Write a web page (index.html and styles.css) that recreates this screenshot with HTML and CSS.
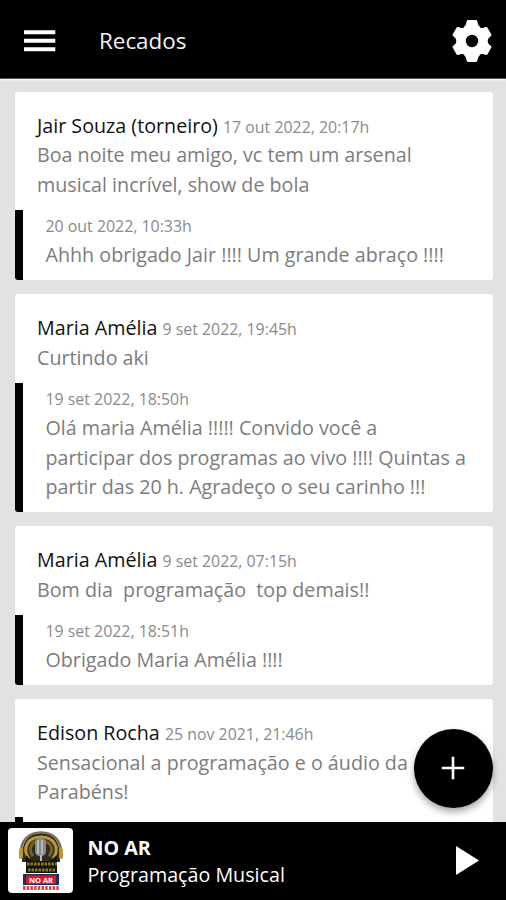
FILE: index.html
```html
<!DOCTYPE html>
<html lang="pt-BR">
<head>
<meta charset="utf-8">
<title>Recados</title>
<link rel="stylesheet" href="styles.css">
</head>
<body>
<div class="app">
  <header class="topbar">
    <svg class="menu-icon" viewBox="0 0 32 22" aria-hidden="true"><path d="M0 2.3h31.3M0 10.8h31.3M0 19.3h31.3"/></svg>
    <h1 class="title">Recados</h1>
    <svg class="gear-icon" viewBox="-21 -21 42 42" aria-hidden="true">
      <defs><path id="tooth" d="M-6.5-13.5-4.8-15.5-3.9-19.4H3.9L4.8-15.5 6.5-13.5z"/></defs>
      <g class="teeth">
        <use href="#tooth"/><use href="#tooth" transform="rotate(60) scale(.96)"/><use href="#tooth" transform="rotate(120) scale(.96)"/>
        <use href="#tooth" transform="rotate(180)"/><use href="#tooth" transform="rotate(240) scale(.96)"/><use href="#tooth" transform="rotate(300) scale(.96)"/>
      </g>
      <circle class="ring" r="10.8"/>
    </svg>
  </header>
  <main class="feed">
    <article class="card">
      <div class="message">
        <div class="meta"><span class="name">Jair Souza (torneiro)</span> <time>17 out 2022, 20:17h</time></div>
        <p>Boa noite meu amigo, vc tem um arsenal<br>musical incrível, show de bola</p>
      </div>
      <div class="reply">
        <div class="meta"><time>20 out 2022, 10:33h</time></div>
        <p>Ahhh obrigado Jair !!!! Um grande abraço !!!!</p>
      </div>
    </article>
    <article class="card">
      <div class="message">
        <div class="meta"><span class="name">Maria Amélia</span> <time>9 set 2022, 19:45h</time></div>
        <p>Curtindo aki</p>
      </div>
      <div class="reply">
        <div class="meta"><time>19 set 2022, 18:50h</time></div>
        <p>Olá maria Amélia !!!!! Convido você a<br>participar dos programas ao vivo !!!! Quintas a<br>partir das 20 h. Agradeço o seu carinho !!!</p>
      </div>
    </article>
    <article class="card">
      <div class="message">
        <div class="meta"><span class="name">Maria Amélia</span> <time>9 set 2022, 07:15h</time></div>
        <p>Bom dia&nbsp; programação&nbsp; top demais!!</p>
      </div>
      <div class="reply">
        <div class="meta"><time>19 set 2022, 18:51h</time></div>
        <p>Obrigado Maria Amélia !!!!</p>
      </div>
    </article>
    <article class="card">
      <div class="message">
        <div class="meta"><span class="name">Edison Rocha</span> <time>25 nov 2021, 21:46h</time></div>
        <p>Sensacional a programação e o áudio da<br>Parabéns!</p>
      </div>
      <div class="reply"></div>
    </article>
  </main>
  <button class="fab" aria-label="Adicionar"><svg viewBox="0 0 24 24"><path d="M12 .8v22.4M.8 12h22.4"/></svg></button>
  <footer class="player">
    <svg class="cover" viewBox="0 0 65 65" aria-hidden="true">
      <rect width="65" height="65" rx="4" fill="#fff"/>
      <path d="M14 28C14 12 22 5 33 5s19 7 19 23v6H14z" fill="#302b20"/>
      <path d="M13 27C12 12 21 4.5 33 4.5S54 12 53 27" fill="none" stroke="#77705c" stroke-width="2.5"/>
      <path d="M21 31C13 19 21 9 33 9s20 10 12 22" fill="none" stroke="#b89b38" stroke-width="3"/>
      <path d="M25 28c-6-8-1-15 8-15s14 7 8 15" fill="none" stroke="#75602a" stroke-width="3"/>
      <rect x="11" y="20" width="4" height="11" rx="2" fill="#b89a30"/>
      <rect x="51" y="20" width="4" height="11" rx="2" fill="#b89a30"/>
      <rect x="27" y="10" width="11" height="18" rx="4.5" fill="#888"/>
      <path d="M30 12v14M34 12v14" stroke="#c8c8c8" stroke-width="1.5"/>
      <path d="M33 27v6" stroke="#bbb" stroke-width="2"/>
      <path d="M18 27l6 6h18l7-6v18H18z" fill="#171308"/>
      <path d="M19 36h30M20 42h28" stroke="#8d7a22" stroke-width="3" stroke-dasharray="2.5 1"/>
      <rect x="15" y="46" width="36" height="11" fill="#143364"/>
      <rect x="18" y="47.5" width="30" height="8.5" fill="#df1825"/>
      <text x="33" y="54.5" class="cover-text">NO AR</text>
      <path d="M15 60h36" stroke="#d64850" stroke-width="4" stroke-dasharray="2.5 1.2"/>
    </svg>
    <div class="track"><strong>NO AR</strong><span>Programação Musical</span></div>
    <svg class="play" viewBox="0 0 23 29" aria-hidden="true"><path d="M0 0 23 14.5 0 29z"/></svg>
  </footer>
</div>
</body>
</html>
```

FILE: styles.css
```css
* { box-sizing: border-box; }
body { margin: 0; font-family: "Open Sans", "Noto Sans", sans-serif; }
.app {
  position: relative;
  display: flex;
  flex-direction: column;
  height: 900px;
  overflow: hidden;
  background: #e2e2e2;
}
.topbar {
  flex: none;
  display: flex;
  align-items: center;
  height: 79px;
  padding: 3px 13.5px 0 24px;
  background: #000;
  border-bottom: 1px solid #555;
  box-shadow: 0 1px 2px #fff;
}
.menu-icon { width: 32px; height: 22px; stroke: #fff; stroke-width: 4; }
.title { margin: 0 auto 0 43px; color: #f4f4f4; font-size: 22.4px; font-weight: 400; line-height: 30px; }
.gear-icon { width: 42px; height: 42px; }
.teeth { fill: #fff; stroke: #fff; stroke-width: 3; stroke-linejoin: round; }
.ring { fill: none; stroke: #fff; stroke-width: 9.2; }
.feed {
  flex: 1;
  min-height: 0;
  overflow: hidden;
  display: flex;
  flex-direction: column;
  gap: 14px;
  padding: 12.6px 13.5px 0 14.5px;
}
.card { flex: none; overflow: hidden; border-radius: 3px; background: #fff; }
.message { padding: 19px 0 10.8px 22.5px; }
.reply { min-height: 40px; padding: .8px 0 10.4px 23px; border-left: 8px solid #000; }
.meta, .card p { margin: 0; line-height: 29.5px; white-space: nowrap; }
.meta { height: 29.5px; font-size: 19.7px; }
.reply .meta { line-height: 28px; }
.name { color: #111; }
time { color: #8a8a8a; font-size: 15.9px; }
.card p { color: #7c7c7c; font-size: 19.7px; }
.fab {
  position: absolute;
  right: 13.5px;
  top: 728.5px;
  display: grid;
  place-items: center;
  width: 79px;
  height: 79px;
  padding: 0;
  border: 0;
  border-radius: 50%;
  background: #000;
  box-shadow: 0 4px 7px rgba(0, 0, 0, .35);
}
.fab svg { width: 24px; height: 24px; stroke: #fff; stroke-width: 2.6; }
.player {
  flex: none;
  display: flex;
  align-items: center;
  height: 78px;
  padding: 0 27.5px 1px 7.5px;
  background: #000;
}
.cover { width: 65px; height: 65px; }
.cover-text { font: bold 7.5px "Open Sans", sans-serif; fill: #fff; text-anchor: middle; }
.track { display: flex; flex-direction: column; margin: 1px auto 0 15px; color: #fff; font-size: 19.7px; line-height: 27px; }
.play { width: 23px; height: 29px; fill: #fff; }
```
